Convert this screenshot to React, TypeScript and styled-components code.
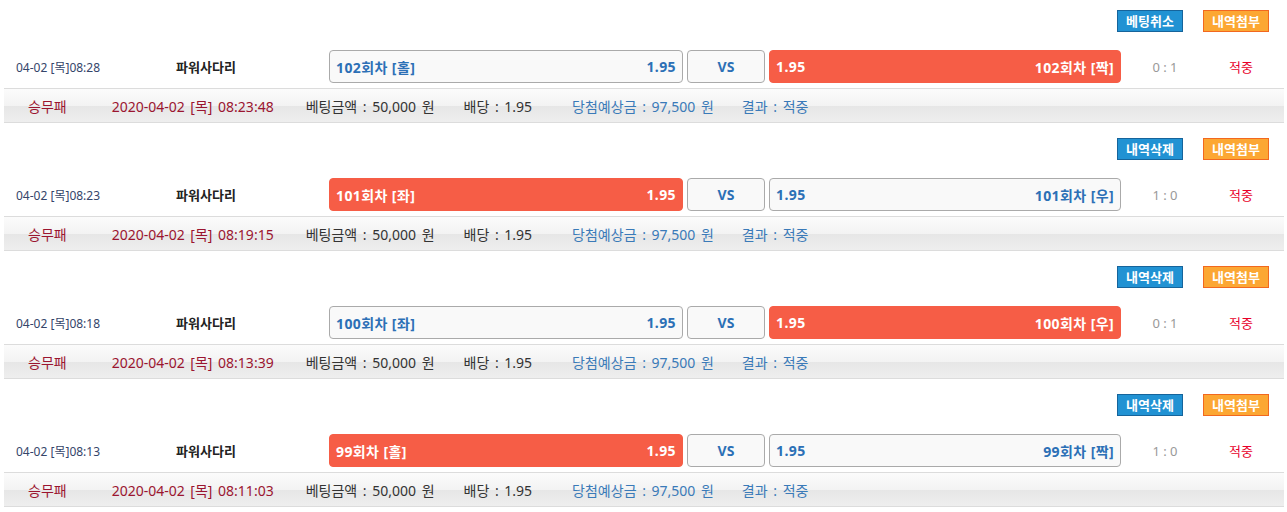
import styled, { createGlobalStyle } from 'styled-components'

interface BetItem {
  time: string
  round: number
  left: string
  right: string
  picked: 'left' | 'right'
  score: string
  placedAt: string
  firstAction: string
}

const bets: BetItem[] = [
  { time: '04-02 [목]08:28', round: 102, left: '홀', right: '짝', picked: 'right', score: '0 : 1', placedAt: '08:23:48', firstAction: '베팅취소' },
  { time: '04-02 [목]08:23', round: 101, left: '좌', right: '우', picked: 'left', score: '1 : 0', placedAt: '08:19:15', firstAction: '내역삭제' },
  { time: '04-02 [목]08:18', round: 100, left: '좌', right: '우', picked: 'right', score: '0 : 1', placedAt: '08:13:39', firstAction: '내역삭제' },
  { time: '04-02 [목]08:13', round: 99, left: '홀', right: '짝', picked: 'left', score: '1 : 0', placedAt: '08:11:03', firstAction: '내역삭제' },
]

function BetBlock({ bet }: { bet: BetItem }) {
  return (
    <Block>
      <ButtonRow>
        <ActionButton $variant="blue">{bet.firstAction}</ActionButton>
        <ActionButton $variant="orange">내역첨부</ActionButton>
      </ButtonRow>
      <MainRow>
        <DateCell>{bet.time}</DateCell>
        <GameCell>파워사다리</GameCell>
        <PickArea>
          <PickBox $selected={bet.picked === 'left'} $width={354}>
            <span>{bet.round}회차 [{bet.left}]</span>
            <span>1.95</span>
          </PickBox>
          <VsBox>VS</VsBox>
          <PickBox $selected={bet.picked === 'right'} $width={352}>
            <span>1.95</span>
            <span>{bet.round}회차 [{bet.right}]</span>
          </PickBox>
        </PickArea>
        <ScoreCell>{bet.score}</ScoreCell>
        <ResultCell>적중</ResultCell>
      </MainRow>
      <Summary>
        <SummaryItem $tone="red" $offset={24}>승무패</SummaryItem>
        <SummaryItem $tone="red" $offset={45}>2020-04-02 [목] {bet.placedAt}</SummaryItem>
        <SummaryItem $tone="dark" $offset={32}>베팅금액 : 50,000 원</SummaryItem>
        <SummaryItem $tone="dark" $offset={29}>배당 : 1.95</SummaryItem>
        <SummaryItem $tone="blue" $offset={40}>당첨예상금 : 97,500 원</SummaryItem>
        <SummaryItem $tone="blue" $offset={28}>결과 : 적중</SummaryItem>
      </Summary>
    </Block>
  )
}

export default function App() {
  return (
    <>
      <GlobalStyle />
      <Page>
        {bets.map(bet => (
          <BetBlock key={bet.round} bet={bet} />
        ))}
      </Page>
    </>
  )
}

const GlobalStyle = createGlobalStyle`
  body {
    margin: 0;
    background: #fff;
    font-family: "Noto Sans", "Noto Sans CJK KR", sans-serif;
  }
`

const Page = styled.div`
  width: 1287px;
`

const Block = styled.div`
  height: 128px;
  padding-top: 10px;
  box-sizing: border-box;
`

const ButtonRow = styled.div`
  display: flex;
  justify-content: flex-end;
  gap: 20px;
  padding-right: 18px;
  height: 22px;
`

const ActionButton = styled.button<{ $variant: 'blue' | 'orange' }>`
  width: 66px;
  height: 22px;
  padding: 0;
  box-sizing: border-box;
  border: 1px solid ${p => (p.$variant === 'blue' ? '#16649b' : '#f2681f')};
  background: ${p => (p.$variant === 'blue' ? '#2192d3' : '#fca733')};
  color: #fff;
  font-family: "Noto Sans CJK KR", sans-serif;
  font-size: 13px;
  font-weight: 700;
  line-height: 20px;
`

const MainRow = styled.div`
  display: flex;
  align-items: center;
  height: 33px;
  margin-top: 18px;
  padding-left: 16px;
`

const DateCell = styled.div`
  width: 134px;
  font-size: 12px;
  color: #35456a;
`

const GameCell = styled.div`
  width: 112px;
  text-align: center;
  font-size: 13px;
  font-weight: 700;
  color: #222;
`

const PickArea = styled.div`
  display: flex;
  gap: 4px;
  margin-left: 67px;
`

const PickBox = styled.div<{ $selected: boolean; $width: number }>`
  width: ${p => p.$width}px;
  height: 33px;
  box-sizing: border-box;
  display: flex;
  align-items: center;
  justify-content: space-between;
  padding: 0 6px;
  border-radius: 4px;
  border: 1px solid ${p => (p.$selected ? '#f65d46' : '#aaa')};
  background: ${p => (p.$selected ? '#f65d46' : '#f9f9f9')};
  color: ${p => (p.$selected ? '#fff' : '#2c70b6')};
  font-size: 14px;
  font-weight: 700;
  letter-spacing: 0.4px;
`

const VsBox = styled.div`
  width: 78px;
  height: 33px;
  box-sizing: border-box;
  display: flex;
  align-items: center;
  justify-content: center;
  border-radius: 4px;
  border: 1px solid #aaa;
  background: #f9f9f9;
  color: #2c70b6;
  font-size: 14px;
  font-weight: 700;
`

const ScoreCell = styled.div`
  width: 88px;
  text-align: center;
  font-size: 13px;
  color: #999;
`

const ResultCell = styled.div`
  width: 64px;
  text-align: center;
  font-size: 13px;
  color: #e8002a;
`

const Summary = styled.div`
  display: flex;
  align-items: center;
  height: 35px;
  box-sizing: border-box;
  margin: 5px 3px 0 4px;
  border-top: 1px solid #dcdcdc;
  border-bottom: 1px solid #dcdcdc;
  background: linear-gradient(to bottom, #fbfbfb 0%, #f3f3f3 50%, #e6e6e6 51%, #eeeeee 100%);
  font-size: 14px;
  word-spacing: 2px;
`

const toneColor = { red: '#9b1530', dark: '#333', blue: '#3a7ab8' }

const SummaryItem = styled.span<{ $tone: 'red' | 'dark' | 'blue'; $offset: number }>`
  margin-left: ${p => p.$offset}px;
  color: ${p => toneColor[p.$tone]};
  white-space: nowrap;
`
